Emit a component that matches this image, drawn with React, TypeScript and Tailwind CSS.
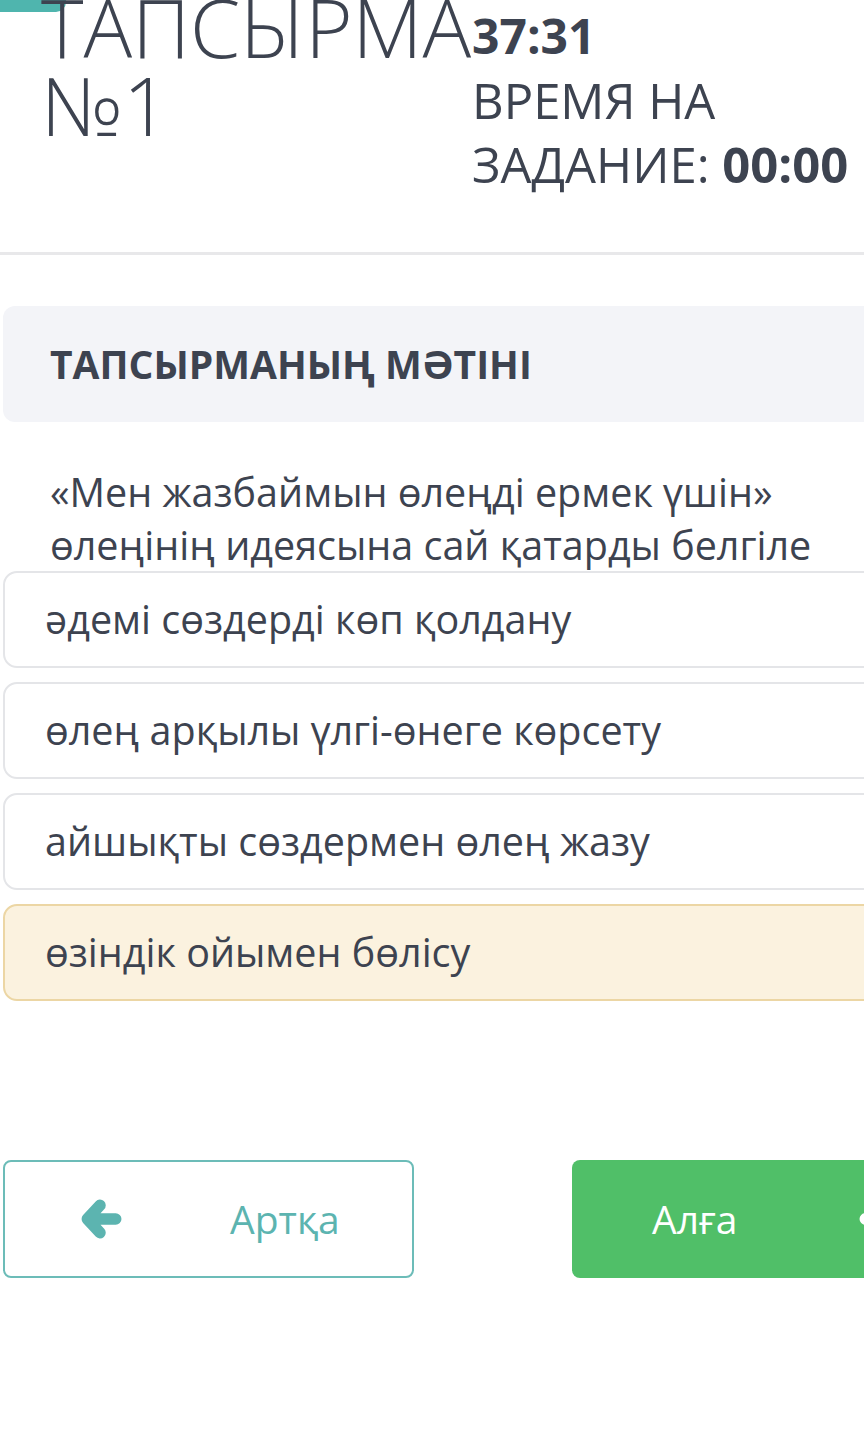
import React from 'react';

const options = [
  { text: 'әдемі сөздерді көп қолдану', picked: false },
  { text: 'өлең арқылы үлгі-өнеге көрсету', picked: false },
  { text: 'айшықты сөздермен өлең жазу', picked: false },
  { text: 'өзіндік ойымен бөлісу', picked: true },
];

const Arrow = ({ dir, className }: { dir: 'left' | 'right'; className?: string }) => (
  <svg viewBox="0 0 40 40" className={className} fill="none" stroke="currentColor" strokeWidth="11" strokeLinecap="round" strokeLinejoin="round">
    {dir === 'left' ? (
      <path d="M34 20H7M19 7L7 20l12 13" />
    ) : (
      <path d="M6 20h27M21 7l12 13-12 13" />
    )}
  </svg>
);

export default function App() {
  return (
    <div
      className="relative w-[864px] h-[1448px] overflow-hidden bg-white text-[#3d4350]"
      style={{ fontFamily: '"Open Sans", "Noto Sans", sans-serif' }}
    >
      {/* teal tab in the corner */}
      <div className="absolute top-0 left-0 w-[66px] h-[12px] bg-[#4fb5ae] rounded-br-[10px]" />

      {/* header */}
      <div className="h-[255px] border-b-[3px] border-[#e8e8ea] grid grid-cols-[472px_1fr]">
        <div className="relative -mt-[12px] pl-[41px] text-[81px] leading-[78px] font-light whitespace-nowrap">
          <div>ТАПСЫРМА</div>
          <div>№1</div>
        </div>
        <div className="pt-[4px] text-[49px] leading-[64px] whitespace-nowrap">
          <div className="font-bold text-[48px]">37:31</div>
          <div>ВРЕМЯ НА</div>
          <div>
            ЗАДАНИЕ: <span className="font-bold">00:00</span>
          </div>
        </div>
      </div>

      {/* task text panel */}
      <div className="ml-[3px] mt-[51px] w-[900px] h-[116px] bg-[#f3f4f8] rounded-l-[12px] flex items-center pl-[47px]">
        <h2 className="text-[39px] font-bold">ТАПСЫРМАНЫҢ МӘТІНІ</h2>
      </div>

      <p className="mt-[44px] pl-[50px] text-[39.5px] leading-[53px]">
        «Мен жазбаймын өлеңді ермек үшін»
        <br />
        өлеңінің идеясына сай қатарды белгіле
      </p>

      {/* answers */}
      <div className="ml-[3px] -mt-[1px] w-[900px] flex flex-col gap-[14px]">
        {options.map((o) => (
          <div
            key={o.text}
            className={
              o.picked
                ? 'h-[97px] rounded-[14px] border-2 border-[#ecd6a4] bg-[#fbf2df] flex items-center pl-[40px] text-[39.5px]'
                : 'h-[97px] rounded-[14px] border-2 border-[#e4e5e8] bg-white flex items-center pl-[40px] text-[39.5px]'
            }
          >
            {o.text}
          </div>
        ))}
      </div>

      {/* navigation */}
      <div className="mt-[159px] flex gap-[158px] pl-[3px]">
        <button className="w-[411px] h-[118px] rounded-[8px] border-2 border-[#6cbcb8] flex items-center text-[#5cb4b0] text-[39px] shrink-0">
          <Arrow dir="left" className="ml-[75px] w-[42px] h-[42px]" />
          <span className="ml-[108px]">Артқа</span>
        </button>
        <button className="w-[340px] h-[118px] rounded-[8px] bg-[#50bf68] flex items-center text-white text-[39px] shrink-0">
          <span className="ml-[80px]">Алға</span>
          <Arrow dir="right" className="ml-[122px] w-[42px] h-[42px] shrink-0" />
        </button>
      </div>
    </div>
  );
}
